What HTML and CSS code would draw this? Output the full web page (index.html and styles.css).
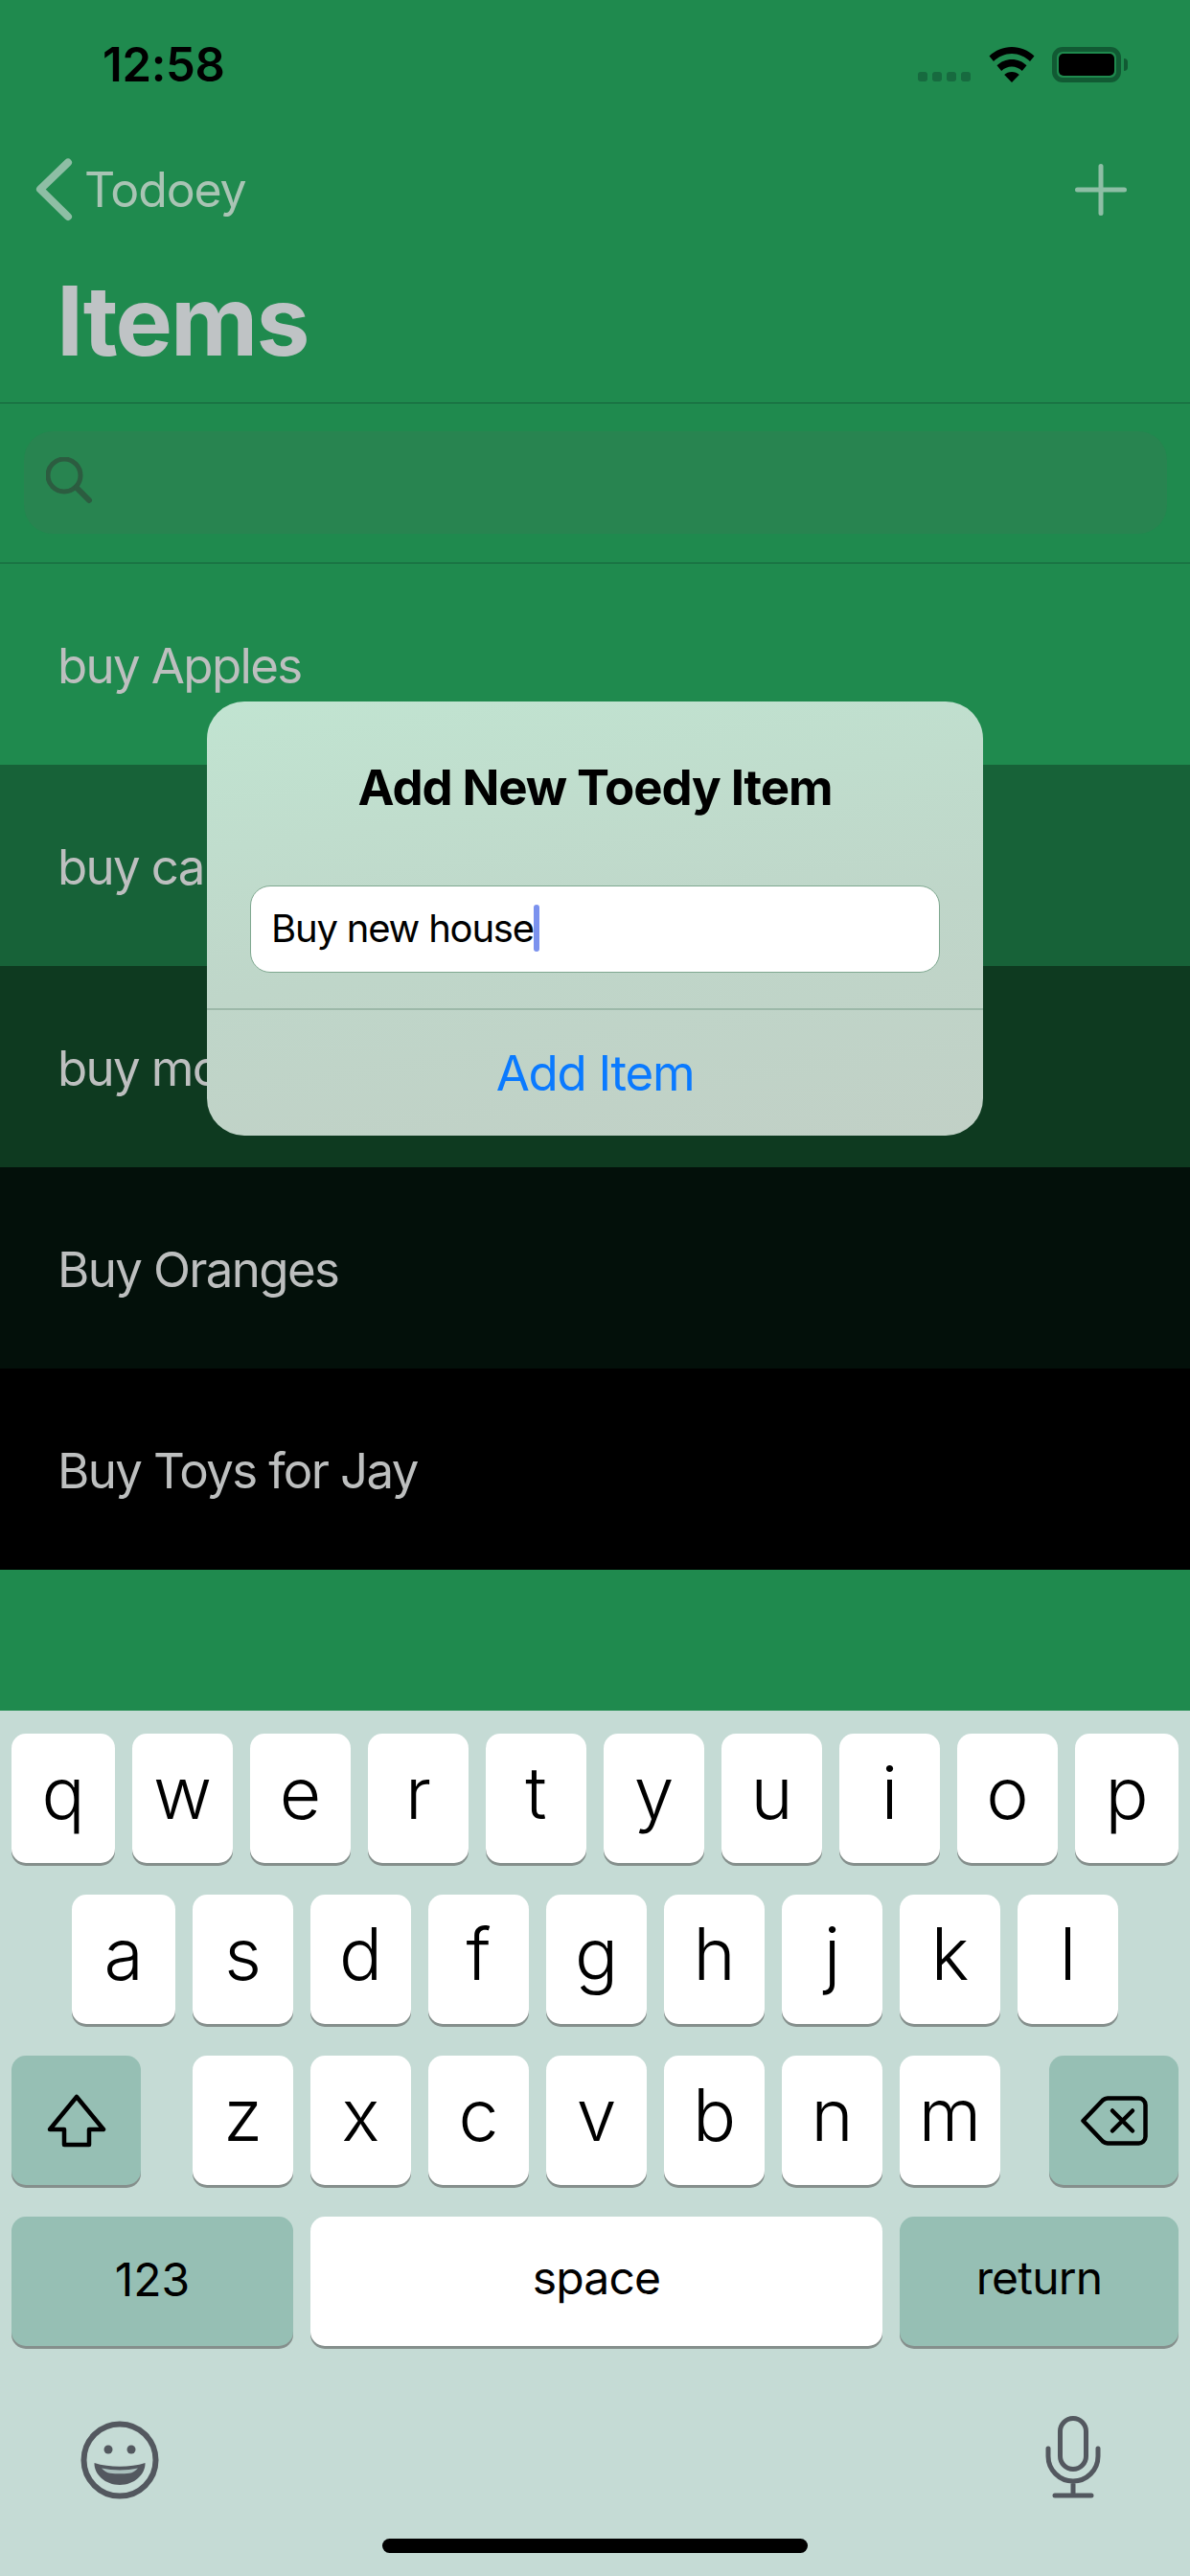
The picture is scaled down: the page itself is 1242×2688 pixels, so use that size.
FILE: index.html
```html
<!DOCTYPE html>
<html lang="en">
<head>
<meta charset="utf-8">
<title>Items</title>
<link rel="stylesheet" href="styles.css">
</head>
<body>
<div class="screen">
  <div class="status">
    <span class="time">12:58</span>
    <div class="status-icons">
      <div class="signal"><i></i><i></i><i></i><i></i></div>
      <svg class="wifi" width="48" height="37" viewBox="0 0 48 37"><path d="M24 0C15 0 7 3.500 0.500 9.500L5 15C10 10 17 7 24 7s14 3 19 8l4.500-5.500C41 3.500 33 0 24 0z"/><path d="M24 13c-6 0-11.500 2.300-15.500 6.300L13.200 25c3-2.800 6.800-4.500 10.800-4.500s7.800 1.700 10.800 4.500l4.700-5.700C35.500 15.300 30 13 24 13z"/><path d="M24 26c-3 0-5.800 1.200-7.800 3.100L24 37l7.800-7.900C29.800 27.200 27 26 24 26z"/></svg>
      <div class="battery"><div class="battery-fill"></div></div>
      <div class="battery-nub"></div>
    </div>
  </div>
  <div class="nav">
    <svg class="chevron" width="40" height="66" viewBox="0 0 40 66"><path d="M35 4.500L6 32.500l29 28.500" fill="none" stroke="#8ebea5" stroke-width="8" stroke-linecap="round" stroke-linejoin="round"/></svg>
    <span class="back">Todoey</span>
    <svg class="plus" width="54" height="54" viewBox="0 0 54 54"><path d="M27 2.500v49M2.500 27h49" stroke="#8ebea5" stroke-width="5" stroke-linecap="round"/></svg>
  </div>
  <h1 class="title">Items</h1>
  <div class="search-wrap">
    <div class="search">
      <svg width="50" height="52" viewBox="0 0 50 52"><circle cx="19" cy="19" r="17" fill="none" stroke="#2c5c40" stroke-width="5"/><path d="M32 32l13 13" stroke="#2c5c40" stroke-width="6" stroke-linecap="round"/></svg>
    </div>
  </div>
  <div class="list">
    <div class="row row-1">buy Apples</div>
    <div class="row row-2">buy ca</div>
    <div class="row row-3">buy mo</div>
    <div class="row row-4">Buy Oranges</div>
    <div class="row row-5">Buy Toys for Jay</div>
  </div>
  <div class="filler"></div>
  <div class="keyboard">
    <div class="keys">
      <div class="key-row">
        <div class="key edge">q</div><div class="key">w</div><div class="key">e</div><div class="key">r</div><div class="key">t</div><div class="key">y</div><div class="key">u</div><div class="key">i</div><div class="key">o</div><div class="key edge">p</div>
      </div>
      <div class="key-row inset">
        <div class="key edge">a</div><div class="key">s</div><div class="key">d</div><div class="key">f</div><div class="key">g</div><div class="key">h</div><div class="key">j</div><div class="key">k</div><div class="key">l</div>
      </div>
      <div class="key-row">
        <div class="key special shift">
          <svg width="62" height="56" viewBox="0 0 62 56"><path d="M31 3L59 37H44V53H18V37H3z" fill="none" stroke="#000" stroke-width="4.500" stroke-linejoin="round"/></svg>
        </div>
        <div class="letters">
          <div class="key">z</div><div class="key">x</div><div class="key">c</div><div class="key">v</div><div class="key">b</div><div class="key">n</div><div class="key">m</div>
        </div>
        <div class="key special shift">
          <svg width="70" height="52" viewBox="0 0 70 52"><path d="M2.500 26L23 4.500a8 8 0 0 1 5-2H60a7 7 0 0 1 7.500 7V42.500a7 7 0 0 1-7.500 7H28a8 8 0 0 1-5-2z" fill="none" stroke="#000" stroke-width="4.500" stroke-linejoin="round"/><path d="M33 15.500l21 21M54 15.500l-21 21" stroke="#000" stroke-width="4.500" stroke-linecap="round"/></svg>
        </div>
      </div>
      <div class="key-row">
        <div class="key special word num">123</div>
        <div class="key word space">space</div>
        <div class="key special word return">return</div>
      </div>
    </div>
    <div class="kb-bottom">
      <svg width="82" height="82" viewBox="0 0 82 82"><circle cx="41" cy="41" r="37.500" fill="none" stroke="#53585f" stroke-width="6"/><circle cx="29" cy="30" r="4.500" fill="#53585f"/><circle cx="53" cy="30" r="4.500" fill="#53585f"/><path d="M14.500 44C30 49 52 49 67.500 44C68 56 56 67 41 67S14 56 14.500 44z" fill="#53585f"/><path d="M22 49.500C34 52 48 52 60 49.500C58 52 54 54.500 51 54.800C44 55.500 38 55.500 31 54.800C28 54.500 24 52 22 49.500z" fill="#a9bfbc"/></svg>
      <svg class="mic" width="58" height="86" viewBox="0 0 58 86"><rect x="15.500" y="2.500" width="27" height="53" rx="13.500" fill="none" stroke="#53585f" stroke-width="5"/><path d="M3 34V42a26 26 0 0 0 52 0V34M29 68V83M10 83H48" fill="none" stroke="#53585f" stroke-width="5" stroke-linecap="round"/></svg>
    </div>
    <div class="home-bar"></div>
  </div>
  <div class="alert">
    <div class="alert-title">Add New Toedy Item</div>
    <div class="alert-input"><span>Buy new house</span><i class="caret"></i></div>
    <div class="alert-action">Add Item</div>
  </div>
</div>
</body>
</html>
```
FILE: styles.css
```css
* { box-sizing: border-box; }
html, body { margin: 0; padding: 0; }
body { font-family: Inter, "Liberation Sans", sans-serif; background: #1f8a4e; }
.screen { position: relative; width: 1242px; height: 2688px; overflow: hidden; background: #1f8a4e; display: flex; flex-direction: column; }

.status { height: 150px; padding: 42px 65px 0 107px; display: flex; justify-content: space-between; align-items: flex-start; }
.time { font-size: 49px; line-height: 52px; font-weight: 600; letter-spacing: -0.300px; color: #000; }
.status-icons { display: flex; align-items: flex-start; padding-top: 7px; }
.signal { display: flex; gap: 5px; margin-top: 26px; margin-right: 19px; }
.signal i { display: block; width: 10px; height: 10px; border-radius: 3px; background: #176a3f; }
.wifi { margin-right: 18px; }
.battery { width: 72px; height: 37px; border: 5px solid #115a33; border-radius: 11px; padding: 2px; }
.battery-fill { width: 100%; height: 100%; background: #000; border-radius: 5px; }
.battery-nub { width: 4px; height: 13px; margin: 12px 0 0 3px; background: #115a33; border-radius: 0 4px 4px 0; }

.nav { height: 96px; padding: 0 66px 0 36px; display: flex; align-items: center; }
.chevron { margin-right: 12px; }
.back { font-size: 50px; line-height: 60px; letter-spacing: -1.100px; color: #a9c4b4; }
.plus { margin-left: auto; }

.title { margin: 0; height: 175px; padding: 32px 0 0 59px; font-size: 100px; line-height: 114px; font-weight: 700; letter-spacing: -1.900px; color: #bfc3c5; border-bottom: 1px solid #14603a; }

.search-wrap { height: 167px; padding: 29px 24px 0 25px; border-bottom: 1px solid #14603a; }
.search { height: 107px; border-radius: 30px; background: #288450; padding: 27px 0 0 23px; }
.search svg { display: block; }

.row { height: 210px; padding-left: 60px; padding-top: 2px; display: flex; align-items: center; font-size: 51px; letter-spacing: -1.650px; color: #bdbfbf; }
.row-1 { background: #1f8a4e; }
.row-2 { background: #176238; }
.row-3 { background: #0e3a20; }
.row-4 { background: #03100a; }
.row-5 { background: #000; }
.filler { flex: 1; }

.keyboard { height: 903px; background: #c5dbd5; position: relative; }
.keys { padding: 24px 12px 0; display: flex; flex-direction: column; gap: 33px; }
.key-row { display: flex; gap: 18px; height: 135px; }
.key-row.inset { padding-left: 63px; }
.letters { display: flex; gap: 18px; margin: 0 33px 0 36px; }
.key { width: 105px; height: 135px; background: #fff; border-radius: 15px; box-shadow: 0 3px 0 #858f8c; display: flex; align-items: center; justify-content: center; font-size: 75px; font-weight: 300; line-height: 1; color: #000; padding-bottom: 12px; }
.key.edge { width: 108px; }
.key.special { background: #96bfb4; }
.key.shift { width: 135px; padding-bottom: 0; }
.key.word { font-size: 48px; font-weight: 400; letter-spacing: -0.800px; padding-bottom: 8px; }
.key.num { padding-bottom: 3px; letter-spacing: 0; }
.num { width: 294px; }
.space { width: 597px; }
.return { width: 291px; }

.kb-bottom { display: flex; justify-content: space-between; align-items: center; padding: 0 93px 0 84px; margin-top: 76px; height: 86px; }
.mic { margin-bottom: 6px; }
.home-bar { position: absolute; left: 399px; bottom: 24px; width: 444px; height: 15px; border-radius: 8px; background: #000; }

.alert { position: absolute; left: 216px; top: 732px; width: 810px; height: 453px; border-radius: 39px; background: linear-gradient(172deg, #c1e4d1 0%, #bfd6c9 55%, #c1d0c6 100%); display: flex; flex-direction: column; }
.alert-title { height: 192px; padding-top: 60px; text-align: center; font-size: 51px; line-height: 60px; font-weight: 700; letter-spacing: -1.100px; color: #000; }
.alert-input { margin: 0 45px; height: 91px; background: #fff; border: 1.500px solid #7fa890; border-radius: 21px; padding-left: 21px; padding-bottom: 2px; display: flex; align-items: center; font-size: 40px; letter-spacing: -1.200px; color: #000; }
.caret { display: block; width: 6px; height: 49px; background: #7b92ee; border-radius: 3px; margin-left: 0; }
.alert-action { margin-top: 37px; height: 133px; border-top: 2px solid #9db9a9; text-align: center; font-size: 51px; line-height: 132px; letter-spacing: -1.300px; color: #0a7aff; }
```
